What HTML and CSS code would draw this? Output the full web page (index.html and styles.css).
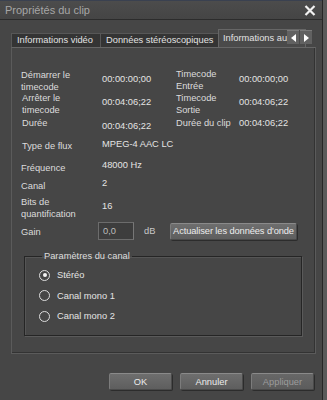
FILE: index.html
```html
<!DOCTYPE html>
<html lang="fr">
<head>
    <meta charset="UTF-8">
    <title>Propriétés du clip</title>
    <link rel="stylesheet" href="styles.css">
</head>
<body>
    <div class="window">
        <div class="titlebar">
            <span class="title">Propriétés du clip</span>
            <svg class="close" width="12" height="11" viewBox="0 0 12 11">
                <path d="M1.5 1 L10.5 10 M10.5 1 L1.5 10" stroke="#f2f2f2" stroke-width="2.2" fill="none"/>
            </svg>
        </div>

        <div class="content">
            <div class="tabstrip">
                <div class="tab">Informations vidéo</div>
                <div class="tab">Données stéréoscopiques</div>
                <div class="tab active">Informations audio</div>
                <div class="tab-scroll">
                    <span class="scroll-btn"><svg width="5" height="8" viewBox="0 0 5 8"><path d="M5 0 L0 4 L5 8 Z" fill="#fff"/></svg></span>
                    <span class="scroll-btn"><svg width="5" height="8" viewBox="0 0 5 8"><path d="M0 0 L5 4 L0 8 Z" fill="#fff"/></svg></span>
                </div>
            </div>

            <div class="panel">
                <div class="tc-grid">
                    <div class="lbl">Démarrer le<br>timecode</div>
                    <div class="val v4">00:00:00;00</div>
                    <div class="lbl up1">Timecode<br>Entrée</div>
                    <div class="val v4">00:00:00;00</div>

                    <div class="lbl shift">Arrêter le<br>timecode</div>
                    <div class="val v4">00:04:06;22</div>
                    <div class="lbl">Timecode<br>Sortie</div>
                    <div class="val v4">00:04:06;22</div>

                    <div class="lbl shift">Durée</div>
                    <div class="val v3">00:04:06;22</div>
                    <div class="lbl">Durée du clip</div>
                    <div class="val">00:04:06;22</div>
                </div>

                <div class="info-row r-flux">
                    <div class="lbl shift p2">Type de flux</div>
                    <div class="val">MPEG-4 AAC LC</div>
                </div>
                <div class="info-row r-freq">
                    <div class="lbl p3">Fréquence</div>
                    <div class="val">48000 Hz</div>
                </div>
                <div class="info-row r-canal">
                    <div class="lbl p3">Canal</div>
                    <div class="val">2</div>
                </div>
                <div class="info-row r-bits">
                    <div class="lbl">Bits de<br>quantification</div>
                    <div class="val v4">16</div>
                </div>

                <div class="gain-row">
                    <div class="lbl gain-lbl">Gain</div>
                    <div class="textbox">0,0</div>
                    <span class="unit">dB</span>
                    <button class="btn wave-btn">Actualiser les données d'onde</button>
                </div>

                <fieldset class="group">
                    <legend>Paramètres du canal</legend>
                    <div class="radio checked"><span class="dot"></span>Stéréo</div>
                    <div class="radio"><span class="dot"></span>Canal mono 1</div>
                    <div class="radio"><span class="dot"></span>Canal mono 2</div>
                </fieldset>
            </div>

            <div class="buttons">
                <button class="btn">OK</button>
                <button class="btn">Annuler</button>
                <button class="btn" disabled>Appliquer</button>
            </div>
        </div>
    </div>
</body>
</html>
```

FILE: styles.css
```css
html, body {
    margin: 0;
    padding: 0;
}
body {
    background: #5a5a5a;
    font-family: "Liberation Sans", Arial, sans-serif;
    font-size: 9.3px;
    color: #dedede;
}
.window {
    width: 323px;
    height: 400px;
    background: #464646;
    border-right: 1px solid #262626;
    box-sizing: border-box;
    overflow: hidden;
}
.titlebar {
    height: 20px;
    border-top: 1px solid #3a4150;
    border-bottom: 1px solid #2c2c2c;
    background: linear-gradient(#4c4c4c, #454545);
    display: flex;
    align-items: center;
    justify-content: space-between;
    padding: 0 6px 0 5px;
    box-sizing: border-box;
}
.title {
    font-size: 11px;
    color: #a6a6a6;
}
.close {
    display: block;
    margin-top: 1px;
}
.content {
    padding: 9px 0 0 11px;
}

/* tabs */
.tabstrip {
    position: relative;
    width: 305px;
    height: 18px;
    display: flex;
    align-items: flex-end;
    overflow: hidden;
}
.tab {
    flex-shrink: 0;
    height: 14px;
    line-height: 13px;
    padding: 0 5px;
    box-sizing: border-box;
    background: #343434;
    border: 1px solid #575757;
    border-bottom: none;
    border-right: none;
    white-space: nowrap;
    color: #e2e2e2;
}
.tab:nth-child(1) { width: 89px; }
.tab:nth-child(2) { width: 118px; }
.tab.active {
    height: 18px;
    line-height: 17px;
    padding-left: 4px;
    background: #4a4a4a;
    border: 1px solid #666;
    border-bottom: none;
}
.tab-scroll {
    position: absolute;
    right: 4px;
    top: 1px;
    display: flex;
    gap: 1px;
    background: #4a4a4a;
}
.scroll-btn {
    width: 12px;
    height: 14px;
    background: #616161;
    border-top: 1px solid #7a7a7a;
    box-sizing: border-box;
    display: flex;
    align-items: center;
    justify-content: center;
}

/* panel */
.panel {
    width: 305px;
    height: 307px;
    box-sizing: border-box;
    border: 1px solid #5b5b5b;
    border-top-color: #666;
    box-shadow: inset -1px -1px 0 #333;
    padding: 21px 0 0 9px;
    line-height: 12px;
}
.lbl {
    color: #dcdcdc;
}
.val {
    color: #e4e4e4;
}
.v3 { padding-top: 3px; }
.v4 { padding-top: 4px; }
.p2 { padding-top: 2px; }
.p3 { padding-top: 3px; }
.up1 { margin-top: -1px; }
.shift { padding-left: 1px; }

.tc-grid {
    display: grid;
    grid-template-columns: 81px 74px 63px auto;
    grid-template-rows: 23px 25px 14px;
    align-items: start;
}
.info-row {
    display: grid;
    grid-template-columns: 81px auto;
    align-items: start;
}
.r-flux { margin-top: 7px; height: 21px; }
.r-freq { height: 18px; }
.r-canal { height: 19px; }
.r-bits { height: 26px; }

.gain-row {
    display: flex;
    align-items: center;
    height: 18px;
}
.gain-lbl {
    width: 77px;
    padding-top: 1px;
}
.textbox {
    width: 36px;
    height: 18px;
    box-sizing: border-box;
    background: #3d3d3d;
    border: 1px solid #6c6c6c;
    border-right-color: #777;
    color: #bcbcbc;
    line-height: 16px;
    padding-left: 4px;
}
.unit {
    margin-left: 10px;
    width: 16px;
    color: #c8c8c8;
}
.btn {
    font: inherit;
    font-size: 9.3px;
    width: 63px;
    height: 17px;
    padding: 0;
    color: #ececec;
    background: linear-gradient(#6e6e6e, #5e5e5e);
    border: 1px solid #4a4a4a;
    border-top-color: #8a8a8a;
    border-left-color: #7c7c7c;
    border-radius: 2px;
    box-shadow: 1px 1px 0 #2c2c2c;
    white-space: nowrap;
}
.btn:disabled {
    color: #9c9c9c;
    background: linear-gradient(#676767, #5c5c5c);
}
.wave-btn {
    width: 127px;
    margin-left: 10px;
    letter-spacing: -0.1px;
}

/* channel group */
.group {
    margin: 10px 0 0 3px;
    width: 278px;
    height: 86px;
    box-sizing: border-box;
    padding: 3px 0 0 14px;
    border: 1px solid #252525;
    box-shadow: 1px 1px 0 #5a5a5a, inset 1px 1px 0 #555;
}
.group legend {
    padding: 0 2px;
    margin-left: 3px;
    color: #dedede;
}
.radio {
    display: flex;
    align-items: center;
    height: 20.5px;
    color: #e4e4e4;
}
.dot {
    width: 11px;
    height: 11px;
    box-sizing: border-box;
    border: 1.5px solid #dcdcdc;
    border-radius: 50%;
    margin-right: 7px;
    display: flex;
    align-items: center;
    justify-content: center;
}
.radio.checked .dot::after {
    content: "";
    width: 4px;
    height: 4px;
    border-radius: 50%;
    background: #f4f4f4;
}

.buttons {
    display: flex;
    justify-content: flex-end;
    gap: 8px;
    width: 303px;
    margin-top: 19px;
}
```
